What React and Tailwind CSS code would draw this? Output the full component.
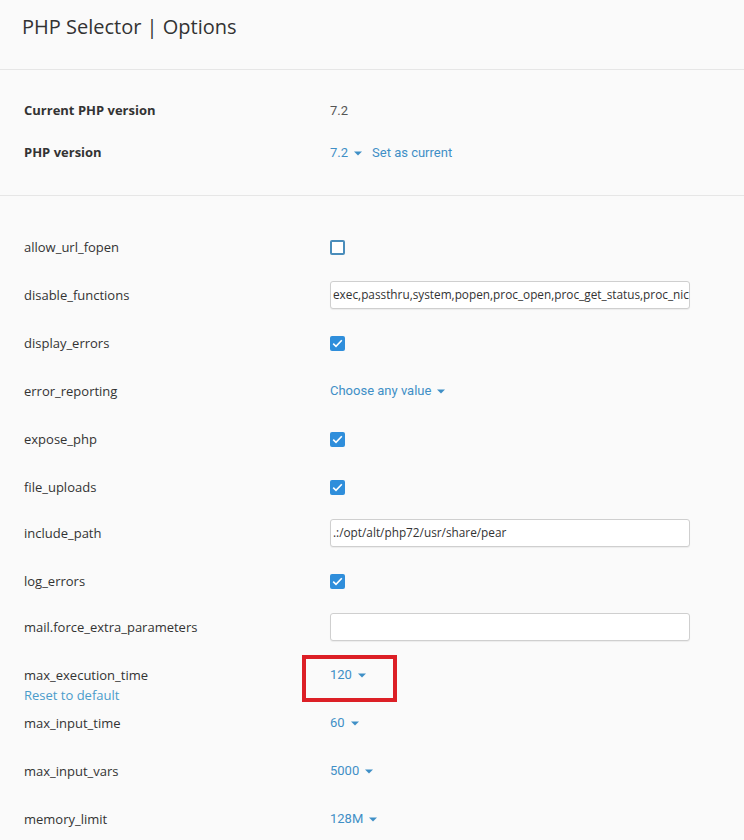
import React from "react";

const label = "font-['Open_Sans',sans-serif] text-[13px] leading-5 text-[#333]";
const link = "font-['Roboto',sans-serif] text-[13px] leading-5 text-[#3f8fc6]";

function Caret() {
  return (
    <svg width="8" height="5" viewBox="0 0 8 5" className="ml-[6px]">
      <path d="M0 0.5h8L4 4.5z" fill="#3f8fc6" />
    </svg>
  );
}

function Select({ value }) {
  return (
    <span className={`flex items-center ${link}`}>
      {value}
      <Caret />
    </span>
  );
}

function Checkbox({ checked }) {
  if (!checked)
    return <span className="block w-[15px] h-[15px] rounded-[2px] border-2 border-[#4a8dbb] bg-white" />;
  return (
    <span className="flex items-center justify-center w-[15px] h-[15px] rounded-[2px] bg-[#2f8edb]">
      <svg width="11" height="9" viewBox="0 0 11 9">
        <path d="M1.2 4.6l2.8 2.7L9.8 1.3" fill="none" stroke="#fff" strokeWidth="1.6" />
      </svg>
    </span>
  );
}

function TextInput({ value }) {
  return (
    <div className="w-[360px] h-[28px] bg-white border border-[#cfcfcf] rounded-[3px] shadow-[0_1px_1px_rgba(0,0,0,0.06)] overflow-hidden flex items-center pl-[2px]">
      <span className="font-['Open_Sans',sans-serif] text-[11.8px] text-[#333] whitespace-nowrap">{value}</span>
    </div>
  );
}

const rows = [
  { name: "allow_url_fopen", el: <Checkbox checked={false} /> },
  { name: "disable_functions", el: <TextInput value="exec,passthru,system,popen,proc_open,proc_get_status,proc_nic" /> },
  { name: "display_errors", el: <Checkbox checked /> },
  { name: "error_reporting", el: <Select value="Choose any value" /> },
  { name: "expose_php", el: <Checkbox checked /> },
  { name: "file_uploads", el: <Checkbox checked />, h: "h-[46px]" },
  { name: "include_path", el: <TextInput value=".:/opt/alt/php72/usr/share/pear" /> },
  { name: "log_errors", el: <Checkbox checked />, h: "h-[46px]" },
  { name: "mail.force_extra_parameters", el: <TextInput value="" /> },
  { name: "max_execution_time", el: <Select value="120" />, reset: true, marked: true },
  { name: "max_input_time", el: <Select value="60" /> },
  { name: "max_input_vars", el: <Select value="5000" /> },
  { name: "memory_limit", el: <Select value="128M" /> },
];

export default function App() {
  return (
    <div className="w-[744px] h-[840px] overflow-hidden bg-[#fafafa]">
      {/* header */}
      <div className="h-[70px] pl-[22px] pt-[11px] border-b border-[#e6e6e6]">
        <h1 className="font-['Open_Sans',sans-serif] text-[20px] leading-8 text-[#333]">PHP Selector | Options</h1>
      </div>

      {/* version */}
      <div className="h-[126px] border-b border-[#e6e6e6] pt-[31px]">
        <div className="flex items-center h-5 pl-6">
          <div className="w-[306px] font-['Open_Sans',sans-serif] text-[13px] font-bold text-[#333]">Current PHP version</div>
          <div className="font-['Roboto',sans-serif] text-[13px] text-[#555]">7.2</div>
        </div>
        <div className="flex items-center h-5 pl-6 mt-[22px]">
          <div className="w-[306px] font-['Open_Sans',sans-serif] text-[13px] font-bold text-[#333]">PHP version</div>
          <Select value="7.2" />
          <span className={`ml-[10px] ${link}`}>Set as current</span>
        </div>
      </div>

      {/* options */}
      <div className="pt-[28px]">
        {rows.map((r) => (
          <div key={r.name} className={`flex items-start pl-6 pt-[13px] ${r.h || "h-12"}`}>
            <div className="w-[306px]">
              <div className={label}>{r.name}</div>
              {r.reset && <div className="font-['Open_Sans',sans-serif] text-[13px] leading-5 text-[#4a9ccb]">Reset to default</div>}
            </div>
            <div className="relative flex items-center h-5">
              {r.el}
              {r.marked && (
                <div className="absolute left-[-28px] top-[-10px] w-[95px] h-[47px] border-[4px] border-[#dc1f26]" />
              )}
            </div>
          </div>
        ))}
      </div>
    </div>
  );
}
